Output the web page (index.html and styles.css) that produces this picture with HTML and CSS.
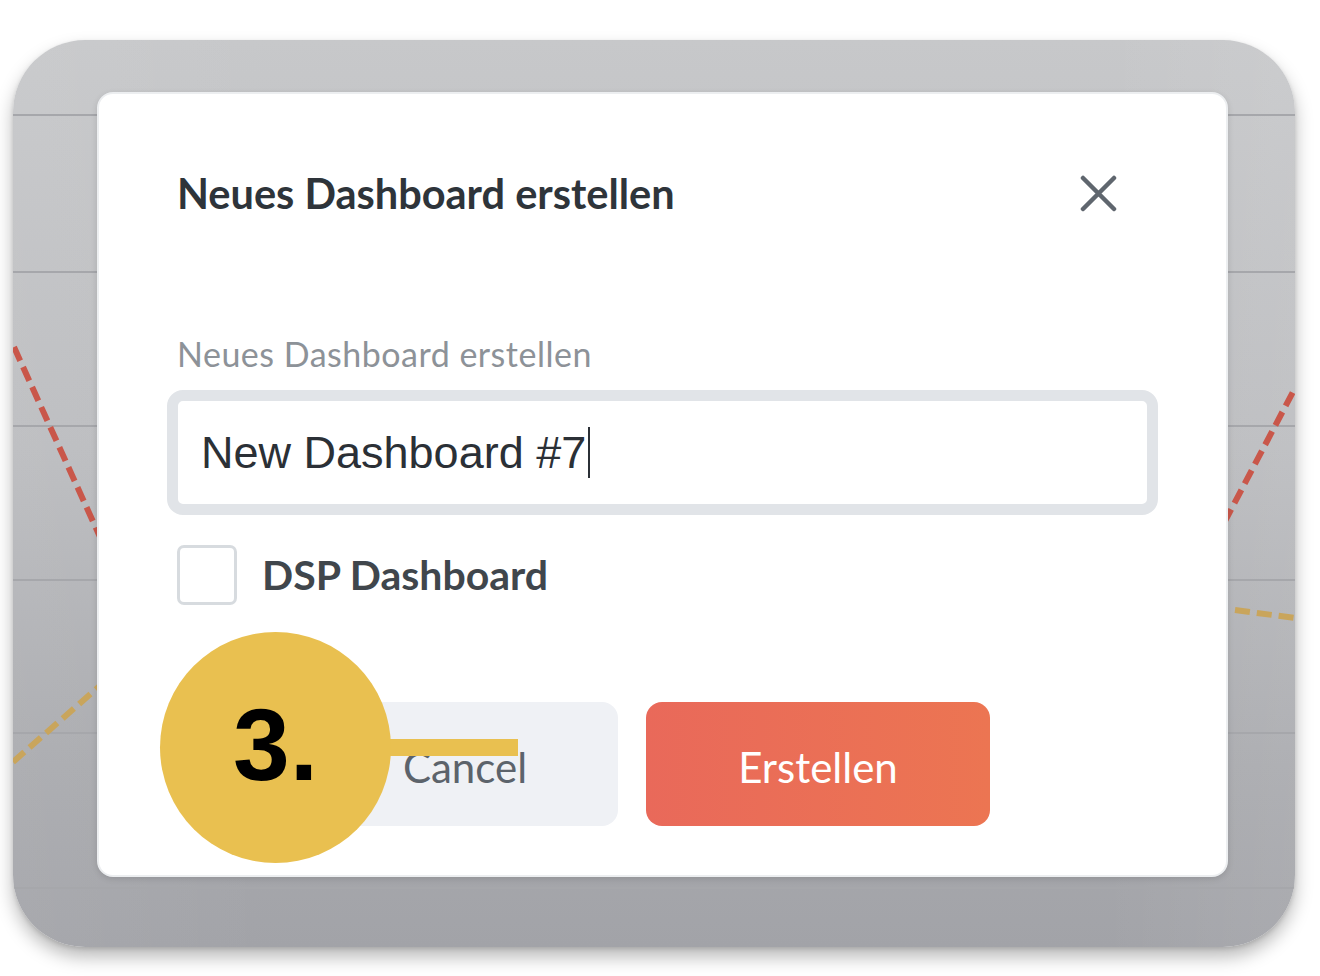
FILE: index.html
```html
<!DOCTYPE html>
<html lang="de">
<head>
<meta charset="utf-8">
<title>Neues Dashboard erstellen</title>
<link rel="stylesheet" href="styles.css">
</head>
<body>
<div class="stage">
  <div class="frame">
    <svg class="backdrop" width="1282" height="907" viewBox="0 0 1282 907" aria-hidden="true">
      <g stroke="#a6a7ab" stroke-width="2">
        <line x1="0" y1="75" x2="1282" y2="75"/>
        <line x1="0" y1="232" x2="1282" y2="232"/>
        <line x1="0" y1="386" x2="1282" y2="386"/>
        <line x1="0" y1="540" x2="1282" y2="540"/>
        <line x1="0" y1="693" x2="1282" y2="693"/>
        <line x1="0" y1="848" x2="1282" y2="848"/>
      </g>
      <g fill="none" stroke-width="6" stroke-dasharray="15 7">
        <line x1="1" y1="307" x2="130" y2="592" stroke="#c9574a"/>
        <line x1="0" y1="722" x2="130" y2="608" stroke="#c9a55c"/>
        <line x1="1160" y1="580" x2="1282" y2="348" stroke="#c9574a"/>
        <line x1="1222" y1="570" x2="1282" y2="578" stroke="#c9a55c"/>
      </g>
    </svg>

    <div class="modal">
      <div class="modal-header">
        <h2 class="modal-title">Neues Dashboard erstellen</h2>
        <button class="close" type="button" aria-label="Schließen">
          <svg width="37" height="37" viewBox="0 0 37 37">
            <path d="M3 3 L34 34 M34 3 L3 34" stroke="#5f666e" stroke-width="4.5" stroke-linecap="round" fill="none"/>
          </svg>
        </button>
      </div>

      <label class="field-label">Neues Dashboard erstellen</label>
      <div class="input">
        <span class="input-text">New Dashboard #7</span><span class="caret"></span>
      </div>

      <div class="check">
        <span class="check-box"></span>
        <span class="check-label">DSP Dashboard</span>
      </div>

      <div class="actions">
        <button class="btn btn-cancel" type="button">Cancel</button>
        <button class="btn btn-primary" type="button">Erstellen</button>
      </div>
    </div>

    <div class="pointer"></div>
    <div class="badge">3.</div>
  </div>
</div>
</body>
</html>
```

FILE: styles.css
```css
* {
  box-sizing: border-box;
}

html, body {
  margin: 0;
  padding: 0;
  background: #ffffff;
}

body {
  width: 1320px;
  height: 976px;
  overflow: hidden;
  font-family: Lato, "Open Sans", sans-serif;
}

.stage {
  padding: 40px 0 0 13px;
}

.frame {
  position: relative;
  width: 1282px;
  height: 907px;
  border-radius: 72px;
  background:
    linear-gradient(90deg, rgba(255, 255, 255, 0.06) 0%, rgba(255, 255, 255, 0) 20%, rgba(255, 255, 255, 0) 85%, rgba(255, 255, 255, 0.08) 100%),
    linear-gradient(180deg, #c7c8ca 0%, #bbbcbf 45%, #a9aaae 80%, #a2a3a8 100%);
  box-shadow: 0 10px 18px rgba(0, 0, 0, 0.28), 0 2px 4px rgba(0, 0, 0, 0.12);
  overflow: hidden;
  padding: 52px 67px 0 84px;
}

.backdrop {
  position: absolute;
  left: 0;
  top: 0;
}

.modal {
  position: relative;
  background: #ffffff;
  border: 2px solid #eceef0;
  border-radius: 16px;
  box-shadow: 0 2px 6px rgba(0, 0, 0, 0.12);
  padding: 75px 78px 49px 78px;
}

.modal-header {
  display: flex;
  align-items: center;
  justify-content: space-between;
  padding-right: 31px;
}

.modal-title {
  margin: 0;
  font-size: 41.5px;
  line-height: 48px;
  font-weight: 700;
  color: #2e343a;
}

.close {
  border: 0;
  padding: 0;
  background: none;
  width: 37px;
  height: 37px;
  display: flex;
}

.field-label {
  display: block;
  margin-top: 117px;
  font-size: 34px;
  line-height: 40px;
  letter-spacing: 0.5px;
  font-weight: 400;
  color: #8d9298;
}

.input {
  margin: 16px -10px 0 -10px;
  height: 125px;
  border: 11px solid #e1e4e8;
  border-radius: 16px;
  padding-left: 23px;
  display: flex;
  align-items: center;
  background: #ffffff;
}

.input-text {
  font-family: "Liberation Sans", Arial, sans-serif;
  font-size: 45px;
  color: #2b3036;
}

.caret {
  width: 2px;
  height: 51px;
  background: #2b3036;
  margin-left: 2px;
}

.check {
  margin-top: 30px;
  display: flex;
  align-items: center;
  gap: 25px;
}

.check-box {
  width: 60px;
  height: 60px;
  border: 3px solid #d7dbdf;
  border-radius: 7px;
  background: #ffffff;
}

.check-label {
  font-size: 41px;
  line-height: 48px;
  font-weight: 700;
  color: #40464c;
}

.actions {
  margin-top: 97px;
  display: flex;
  gap: 28px;
  padding-left: 135px;
}

.btn {
  height: 124px;
  border: 0;
  border-radius: 16px;
  font-family: Lato, "Open Sans", sans-serif;
  font-size: 42px;
  font-weight: 400;
  padding-top: 6px;
}

.btn-cancel {
  width: 306px;
  background: #eff1f5;
  color: #5c636b;
}

.btn-primary {
  width: 344px;
  background: linear-gradient(90deg, #e9695a 0%, #ec7552 100%);
  color: #ffffff;
}

.badge {
  position: absolute;
  left: 147px;
  top: 592px;
  width: 231px;
  height: 231px;
  border-radius: 50%;
  background: #e9c050;
  display: flex;
  align-items: center;
  justify-content: center;
  font-family: "Liberation Sans", Arial, sans-serif;
  font-weight: 700;
  font-size: 102px;
  color: #000000;
  padding-bottom: 4px;
}

.pointer {
  position: absolute;
  left: 360px;
  top: 699px;
  width: 145px;
  height: 17px;
  background: #e9c050;
}
```
